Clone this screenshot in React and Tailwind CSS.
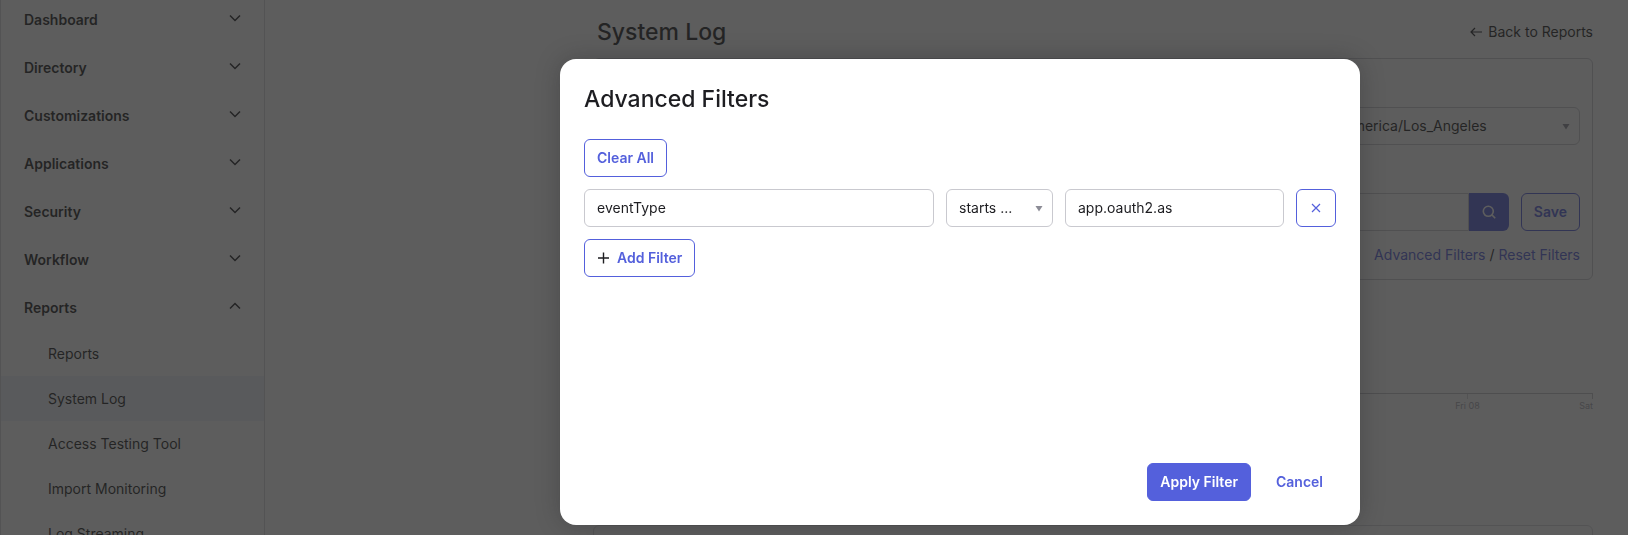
import React, { useState } from 'react';

const navItems = ['Dashboard', 'Directory', 'Customizations', 'Applications', 'Security', 'Workflow', 'Reports'];

const reportItems = ['Reports', 'System Log', 'Access Testing Tool', 'Import Monitoring', 'Log Streaming'];

const Chevron = ({ up }) => (
    <svg className="w-3 h-3 mb-1" viewBox="0 0 12 12" fill="none" stroke="currentColor" strokeWidth="1.5">
        <path d={up ? 'M1 8.5l5-5 5 5' : 'M1 3.5l5 5 5-5'} />
    </svg>
);

const Caret = () => (
    <svg className="absolute right-2.5 top-4 w-2 h-2 pointer-events-none text-[#8c8c96]" viewBox="0 0 8 8" fill="currentColor">
        <path d="M0.5 1h7L4 6.5z" />
    </svg>
);

const Sidebar = () => (
    <nav className="w-[265px] shrink-0 -mt-1 border-x border-[#d7d7dc]">
        {navItems.map(item => (
            <button
                key={item}
                aria-expanded={item === 'Reports'}
                className="w-full h-12 px-[23px] flex items-center justify-between font-semibold"
            >
                {item}
                <Chevron up={item === 'Reports'} />
            </button>
        ))}
        <ul className="-mt-px">
            {reportItems.map(item => (
                <li key={item}>
                    <a
                        href="#"
                        className={`h-[45px] pl-[47px] flex items-center ${item === 'System Log' ? 'bg-[#f0f4fa]' : ''}`}
                    >
                        {item}
                    </a>
                </li>
            ))}
        </ul>
    </nav>
);

const SystemLog = () => (
    <main className="flex-1 min-w-0 pr-[35px]">
        <div className="max-w-[1000px] ml-auto">
            <header className="h-[58px] pl-1 pt-1.5 flex items-center justify-between">
                <h1 className="text-[23px] leading-8 font-medium">System Log</h1>
                <a href="#" className="flex items-center gap-1.5">
                    <svg className="w-3 h-3" viewBox="0 0 12 12" fill="none" stroke="currentColor" strokeWidth="1.2">
                        <path d="M12 6H1M5 2L1 6l4 4" />
                    </svg>
                    Back to Reports
                </a>
            </header>

            <section className="h-[222px] px-3 pt-12 border border-[#c9c9cf] rounded-md">
                <div className="flex justify-end">
                    <div className="relative w-[250px]">
                        <select aria-label="Time zone" className="w-full h-[38px] px-3 appearance-none border border-[#c9c9cf] rounded-md">
                            <option>America/Los_Angeles</option>
                        </select>
                        <Caret />
                    </div>
                </div>
                <div className="flex mt-12">
                    <input aria-label="Search" type="text" className="flex-1 min-w-0 h-[38px] px-3 border border-[#c9c9cf] rounded-l-md" />
                    <button aria-label="Run search" className="w-10 h-[38px] flex items-center justify-center bg-[#5460dc] text-white rounded-r-md">
                        <svg className="w-3.5 h-3.5" viewBox="0 0 14 14" fill="none" stroke="currentColor" strokeWidth="1.6">
                            <circle cx="6.3" cy="6.3" r="5" />
                            <path d="M9.9 9.9l3.3 3.3" />
                        </svg>
                    </button>
                    <button className="h-[38px] px-3 ml-3 border border-[#5460dc] rounded-md text-[#5460dc] font-semibold">Save</button>
                </div>
                <div className="mt-3.5 text-right">
                    <a href="#" className="text-[#5460dc]">Advanced Filters</a> / <a href="#" className="text-[#5460dc]">Reset Filters</a>
                </div>
            </section>

            {/* Event count timeline */}
            <div className="mt-[113px]">
                <div className="h-1.5 border-t border-r border-[#c1c1c7] flex justify-end">
                    <div className="w-[125px] border-l border-[#d7d7dc]"></div>
                </div>
                <div className="flex justify-end text-[9px] leading-[14px] text-[#a7a7b0]">
                    <span className="w-[124px]">Fri 08</span>
                    <span>Sat</span>
                </div>
            </div>
            <section className="mt-28 h-40 border border-[#d7d7dc] rounded-md"></section>
        </div>
    </main>
);

const AdvancedFilters = () => {
    const [field, setField] = useState('eventType');
    const [value, setValue] = useState('app.oauth2.as');

    return (
        <div role="dialog" aria-labelledby="filters-title" className="w-[800px] max-w-full p-6 bg-white rounded-2xl shadow-[0_0_24px_rgba(29,29,33,0.3)]">
            <h2 id="filters-title" className="text-[23px] leading-8 font-medium">Advanced Filters</h2>
            <div className="mt-6 min-h-[300px] flex flex-col items-start gap-3">
                <button className="h-[38px] px-3 border border-[#5460dc] rounded-md text-[#5460dc] font-semibold">Clear All</button>
                <div className="w-full flex gap-3">
                    <input
                        aria-label="Field"
                        type="text"
                        value={field}
                        onChange={e => setField(e.target.value)}
                        className="flex-1 min-w-0 h-[38px] px-3 pb-0.5 border border-[#c9c9cf] rounded-md"
                    />
                    <div className="relative w-[107px]">
                        <select aria-label="Operator" className="w-full h-[38px] px-3 appearance-none border border-[#c9c9cf] rounded-md">
                            <option>starts ...</option>
                        </select>
                        <Caret />
                    </div>
                    <input
                        aria-label="Value"
                        type="text"
                        value={value}
                        onChange={e => setValue(e.target.value)}
                        className="w-[219px] h-[38px] px-3 pb-0.5 border border-[#c9c9cf] rounded-md"
                    />
                    <button aria-label="Remove filter" className="w-10 h-[38px] flex items-center justify-center border border-[#5460dc] rounded-md text-[#5460dc]">
                        <svg className="w-2.5 h-2.5" viewBox="0 0 10 10" fill="none" stroke="currentColor" strokeWidth="1.2">
                            <path d="M1 1l8 8M9 1L1 9" />
                        </svg>
                    </button>
                </div>
                <button className="h-[38px] px-3 flex items-center gap-2 border border-[#5460dc] rounded-md text-[#5460dc] font-semibold">
                    <svg className="w-3 h-3 text-[#1d1d21]" viewBox="0 0 12 12" fill="none" stroke="currentColor" strokeWidth="1.4">
                        <path d="M6.5 0.5v11M1 6h11" />
                    </svg>
                    Add Filter
                </button>
            </div>
            <div className="mt-6 flex justify-end gap-3">
                <button className="h-[38px] px-3 border border-[#5460dc] bg-[#5460dc] text-white rounded-md font-semibold">Apply Filter</button>
                <button className="h-[38px] px-3 border border-transparent text-[#5460dc] font-semibold">Cancel</button>
            </div>
        </div>
    );
};

export default function App() {
    return (
        <div className="h-screen overflow-hidden flex bg-white text-[#1d1d21] text-sm font-['Inter',sans-serif]">
            <Sidebar />
            <SystemLog />
            <div className="fixed inset-0 pt-[59px] pr-[268px] flex items-start justify-end bg-[#272727]/75">
                <AdvancedFilters />
            </div>
        </div>
    );
}
